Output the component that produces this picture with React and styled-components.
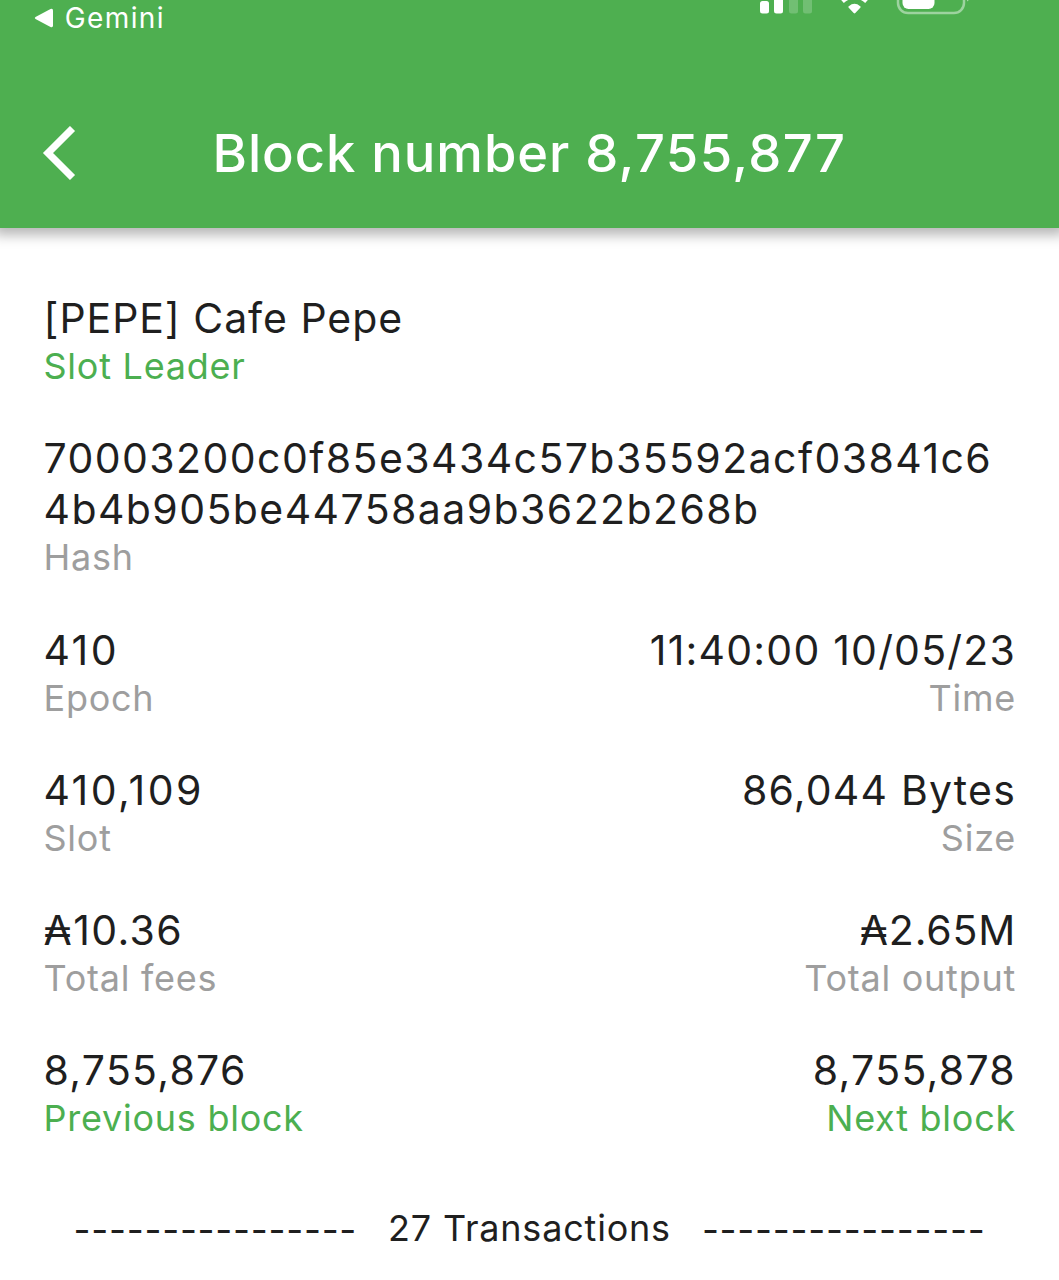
import React from 'react';
import styled, { createGlobalStyle } from 'styled-components';

const GlobalStyle = createGlobalStyle`
  *{
    box-sizing: border-box;
  }
  body{
    margin: 0;
    background: #fff;
    font-family: Inter, "Liberation Sans", sans-serif;
    color: #1f1f1f;
  }
`
const Screen = styled.main`
  height: 1280px;
  overflow: hidden;
  background: #fff;
`
const Header = styled.header`
  height: 228px;
  background: #4eaf50;
  color: #fff;
  box-shadow: 0 1px 12px 6px rgba(0, 0, 0, 0.29);
`
const StatusBar = styled.div`
  display: flex;
  justify-content: space-between;
  align-items: flex-start;
  height: 78px;
  padding: 0 89px 0 34px;
`
const BackToApp = styled.div`
  display: flex;
  align-items: center;
  gap: 10.7px;
  height: 35px;
  font-size: 28px;
  letter-spacing: 1.4px;
`
const NavBar = styled.nav`
  display: grid;
  grid-template-columns: 170px 1fr 170px;
  align-items: center;
  height: 150px;
`
const BackButton = styled.button`
  width: 34px;
  height: 54px;
  margin-left: 42px;
  padding: 0;
  border: 0;
  background: none;
  color: inherit;
  svg{
    display: block;
  }
`
const Title = styled.h1`
  margin: 0;
  text-align: center;
  white-space: nowrap;
  font-size: 52.5px;
  font-weight: 500;
  line-height: 60px;
  letter-spacing: 0.95px;
`
const BlockNumber = styled.span`
  letter-spacing: 1.4px;
`
const Details = styled.section`
  display: flex;
  flex-direction: column;
  gap: 45.25px;
  padding: 65px 43px 0 43.5px;
`
const Row = styled.div`
  display: flex;
  justify-content: space-between;
`
const Item = styled.div`
  text-align: ${props => (props.$right ? 'right' : 'left')};
`
const Value = styled.div`
  font-size: 41px;
  line-height: 51px;
  letter-spacing: ${props => props.$tracking}px;
  white-space: pre-line;
`
const Label = styled.div`
  font-size: 36px;
  line-height: 44px;
  letter-spacing: 0.75px;
  color: ${props => (props.$link ? '#4caf50' : '#9e9e9e')};
`
const Divider = styled.div`
  display: flex;
  justify-content: center;
  align-items: center;
  gap: 31px;
  margin-top: 62.75px;
  font-size: 36px;
  line-height: 50px;
  letter-spacing: 0.8px;
`
const Dashes = styled.span`
  padding-top: 4px;
  font-size: 37px;
  line-height: 46px;
  letter-spacing: 0.7px;
`

const StatusIcons = () => (
  <svg width="212" height="16" viewBox="0 0 212 16" fill="none">
    <rect x="2" y="1" width="9" height="12.5" rx="2.5" fill="#fff" />
    <rect x="16" y="-8" width="9" height="21.5" rx="2.5" fill="#fff" />
    <g fill="#fff" fillOpacity="0.2">
      <rect x="31" y="-8" width="9" height="21.5" rx="2.5" />
      <rect x="45" y="-8" width="9" height="21.5" rx="2.5" />
    </g>
    <path d="M90.5 7.5Q90 6.8 90.8 6.2Q96.500 1.5 102.200 6.200Q103 6.800 102.500 7.500L97.300 13Q96.500 13.800 95.700 13Z" fill="#fff" />
    <path d="M84.500 1.500Q96.500 -9 108.500 1.500" stroke="#fff" strokeWidth="4" />
    <rect x="140" y="-18" width="66" height="31" rx="10" stroke="#fff" strokeOpacity="0.45" strokeWidth="2.5" />
    <rect x="144.500" y="-14" width="32" height="23" rx="6" fill="#fff" />
    <path d="M209 -4V1.500Q211 0.500 211.500 -1.500" fill="#fff" fillOpacity="0.5" />
  </svg>
);

const details = [
  [{ value: '[PEPE] Cafe Pepe', label: 'Slot Leader', tracking: 0.95, link: true }],
  [{ value: '70003200c0f85e3434c57b35592acf03841c6\n4b4b905be44758aa9b3622b268b', label: 'Hash', tracking: 1.42 }],
  [
    { value: '410', label: 'Epoch', tracking: 2.4 },
    { value: '11:40:00 10/05/23', label: 'Time', tracking: 1.2 },
  ],
  [
    { value: '410,109', label: 'Slot', tracking: 2.4 },
    { value: '86,044 Bytes', label: 'Size', tracking: 1.2 },
  ],
  [
    { value: '₳10.36', label: 'Total fees', tracking: 1.4 },
    { value: '₳2.65M', label: 'Total output', tracking: 0.8 },
  ],
  [
    { value: '8,755,876', label: 'Previous block', tracking: 1.3, link: true },
    { value: '8,755,878', label: 'Next block', tracking: 1.3, link: true },
  ],
];

const App = () => {
  return (
    <Screen>
      <GlobalStyle />
      <Header>
        <StatusBar>
          <BackToApp>
            <svg width="20" height="20" viewBox="0 0 20 20">
              <path d="M1.500 9L16.500 1Q19 0 19 2.500V17.500Q19 20 16.500 19L1.500 11Q0 10 1.500 9Z" fill="#fff" />
            </svg>
            Gemini
          </BackToApp>
          <StatusIcons />
        </StatusBar>
        <NavBar>
          <BackButton aria-label="Back">
            <svg width="34" height="54" viewBox="0 0 34 54">
              <path d="M30.500 2.500L6 27L30.500 51.500" fill="none" stroke="#fff" strokeWidth="7.2" />
            </svg>
          </BackButton>
          <Title>Block number <BlockNumber>8,755,877</BlockNumber></Title>
        </NavBar>
      </Header>
      <Details>
        {details.map(items => (
          <Row key={items[0].label}>
            {items.map((item, index) => (
              <Item key={item.label} $right={index === 1}>
                <Value $tracking={item.tracking}>{item.value}</Value>
                <Label $link={item.link}>{item.label}</Label>
              </Item>
            ))}
          </Row>
        ))}
      </Details>
      <Divider>
        <Dashes>----------------</Dashes>
        <span>27 Transactions</span>
        <Dashes>----------------</Dashes>
      </Divider>
    </Screen>
  );
};

export default App;
